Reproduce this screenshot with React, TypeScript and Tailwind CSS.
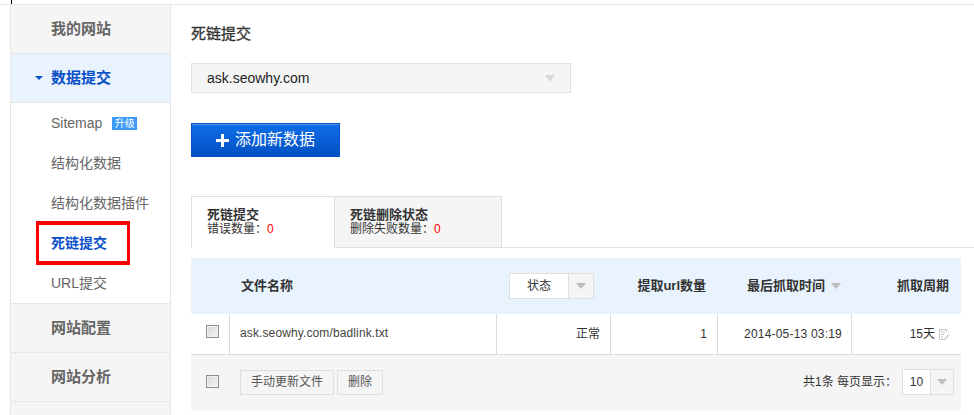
import React from "react";

const font = { fontFamily: '"Liberation Sans", "Noto Sans CJK SC", sans-serif' };

function Caret({ className }: { className: string }) {
  return <span className={"inline-block h-0 w-0 border-x-transparent " + className} />;
}

function Section({ label }: { label: string }) {
  return (
    <div className="flex h-[49px] shrink-0 items-center border-b border-[#e6e6e6] bg-[#f5f5f5] pl-[40px] text-[15px] font-bold text-[#666]">
      {label}
    </div>
  );
}

function Sub({ children, active }: { children: React.ReactNode; active?: boolean }) {
  return (
    <div className={"relative flex h-[40px] items-center pl-[40px] text-[14px] " + (active ? "font-bold text-[#0a50c8]" : "text-[#666]")}>
      {children}
      {active && <div className="pointer-events-none absolute left-[25px] top-[-2px] h-[44px] w-[94px] border-x-[3px] border-y-[4px] border-[#f00]" />}
    </div>
  );
}

function Check() {
  return <span className="block h-[13px] w-[13px] border border-[#8f8f8f] bg-gradient-to-br from-[#d8d8d8] to-[#f4f4f4] shadow-[inset_0_0_0_1px_#f2f2f2]" />;
}

function Dropdown({ label, w, arrow }: { label: string; w: string; arrow: string }) {
  return (
    <div className={"flex h-[26px] border border-[#e0e0e0] bg-white text-[12px] text-[#333] " + w}>
      <div className="flex flex-1 items-center justify-center">{label}</div>
      <div className={"flex items-center justify-center border-l border-[#e0e0e0] bg-[#f5f5f5] " + arrow}>
        <Caret className="border-x-[5px] border-t-[6px] border-t-[#bdbdbd]" />
      </div>
    </div>
  );
}

export default function App() {
  return (
    <div className="h-[415px] w-[974px] overflow-hidden bg-white" style={font}>
      <div className="ml-[11px] h-[4px] w-px bg-black" />
      <div className="flex h-[411px] border-t border-[#e6e6e6]">
        <aside className="ml-[10px] flex w-[161px] shrink-0 flex-col border-x border-[#e6e6e6]">
          <Section label="我的网站" />
          <div className="flex h-[49px] shrink-0 items-center border-b border-[#e6e6e6] bg-[#e8f3fd] pl-[24px] text-[15px] font-bold text-[#0a50c8]">
            <Caret className="mr-[8px] border-x-[4px] border-t-[4px] border-t-[#0a50c8]" />
            数据提交
          </div>
          <div className="border-b border-[#e6e6e6]">
            <Sub>
              Sitemap
              <span className="ml-[10px] flex h-[13px] w-[25px] items-center justify-center bg-[#3d9bf5] text-[10px] text-white">升级</span>
            </Sub>
            <Sub>结构化数据</Sub>
            <Sub>结构化数据插件</Sub>
            <Sub active>死链提交</Sub>
            <Sub>URL提交</Sub>
          </div>
          <Section label="网站配置" />
          <Section label="网站分析" />
          <div className="flex-1 bg-[#f5f5f5]" />
        </aside>

        <main className="min-w-0 flex-1 pl-[20px]">
          <h1 className="mt-[18px] h-[21px] text-[15px] font-normal leading-[21px] text-[#333] [-webkit-text-stroke:0.3px_#333]">死链提交</h1>
          <div className="mt-[19px] flex h-[30px] w-[380px] items-center justify-between border border-[#e0e0e0] bg-[#f5f5f5] pl-[15px] pr-[15px] text-[14px] text-[#222]">
            ask.seowhy.com
            <Caret className="border-x-[5px] border-t-[7px] border-t-[#d9d9d9]" />
          </div>
          <button className="mt-[30px] flex h-[34px] w-[149px] items-center justify-center border border-[#0a50c8] bg-gradient-to-b from-[#0f6fe8] to-[#0450c4] text-[16px] text-white shadow-[inset_0_1px_0_#4f97ee]">
            <span className="relative mr-[6px] h-[13px] w-[13px]">
              <span className="absolute left-[5px] top-0 h-[13px] w-[3px] bg-white" />
              <span className="absolute left-0 top-[5px] h-[3px] w-[13px] bg-white" />
            </span>
            添加新数据
          </button>

          <div className="mt-[39px] flex h-[52px] border-b border-[#e0e0e0] text-[12px] leading-[15px] text-[#333]">
            <div className="-mb-px h-[52px] w-[144px] border-x border-t border-[#e0e0e0] bg-white pl-[15px] pt-[10px]">
              <div className="text-[13px] font-bold">死链提交</div>
              <div>错误数量：<span className="text-[#f00]">0</span></div>
            </div>
            <div className="h-[51px] w-[167px] border-r border-t border-[#e0e0e0] bg-[#f5f5f5] pl-[15px] pt-[10px]">
              <div className="text-[13px] font-bold">死链删除状态</div>
              <div>删除失败数量：<span className="text-[#f00]">0</span></div>
            </div>
          </div>

          <div className="mt-[10px] w-[770px] text-[12px] text-[#333]">
            <div className="grid h-[56px] grid-cols-[39px_267px_114px_107px_134px_109px] items-center bg-[#e8f3fd] text-[13px] font-bold">
              <div />
              <div className="pl-[11px]">文件名称</div>
              <div className="pl-[12px] font-normal"><Dropdown label="状态" w="w-[85px]" arrow="w-[25px]" /></div>
              <div className="pr-[12px] text-right">提取url数量</div>
              <div className="flex items-center justify-end gap-[5px] pr-[11px]">
                <span className="mr-[1px]">最后抓取时间</span>
                <Caret className="border-x-[5px] border-t-[6px] border-t-[#bdbdbd]" />
              </div>
              <div className="pr-[12px] text-right">抓取周期</div>
            </div>
            <div className="grid h-[41px] grid-cols-[39px_267px_114px_107px_134px_109px] border-b border-[#dcdcdc]">
              <div className="border-r border-[#dcdcdc] pl-[15px] pt-[11px]"><Check /></div>
              <div className="flex items-center border-r border-[#dcdcdc] pl-[10px] pb-[2px] tracking-[0.12px] text-[#444]">ask.seowhy.com/badlink.txt</div>
              <div className="flex items-center justify-end border-r border-[#dcdcdc] pr-[10px]">正常</div>
              <div className="flex items-center justify-end border-r border-[#dcdcdc] pr-[10px]">1</div>
              <div className="flex items-center justify-end border-r border-[#dcdcdc] pr-[9px] tracking-[0.2px]">2014-05-13 03:19</div>
              <div className="flex items-center justify-end gap-[3px] pr-[11px]">
                15天
                <svg width="12" height="13" viewBox="0 0 12 13" fill="none" stroke="#c4c4c4" strokeWidth="1">
                  <path d="M8.5 4V1.5h-7v10h5" />
                  <path d="M3 4h4M3 6.5h3M3 9h2" />
                  <path d="M6.5 10.5l4-4 1 1-4 4h-1z" />
                </svg>
              </div>
            </div>
            <div className="flex h-[56px] items-center justify-between bg-[#f5f5f5] pb-[2px] pl-[15px] pr-[7px]">
              <div className="flex items-center">
                <span className="mb-[2px] mr-[21px]"><Check /></span>
                <button className="flex h-[25px] w-[94px] items-center justify-center border border-[#dedede] bg-[#f5f5f5] text-[#555]">手动更新文件</button>
                <button className="ml-[3px] flex h-[25px] w-[46px] items-center justify-center border border-[#dedede] bg-[#f5f5f5] text-[#555]">删除</button>
              </div>
              <div className="mb-[1px] flex items-center">
                <span className="mr-[5px]">共1条 每页显示：</span>
                <div className="w-[52px]"><Dropdown label="10" w="w-[52px]" arrow="w-[23px]" /></div>
              </div>
            </div>
          </div>
        </main>
      </div>
    </div>
  );
}
